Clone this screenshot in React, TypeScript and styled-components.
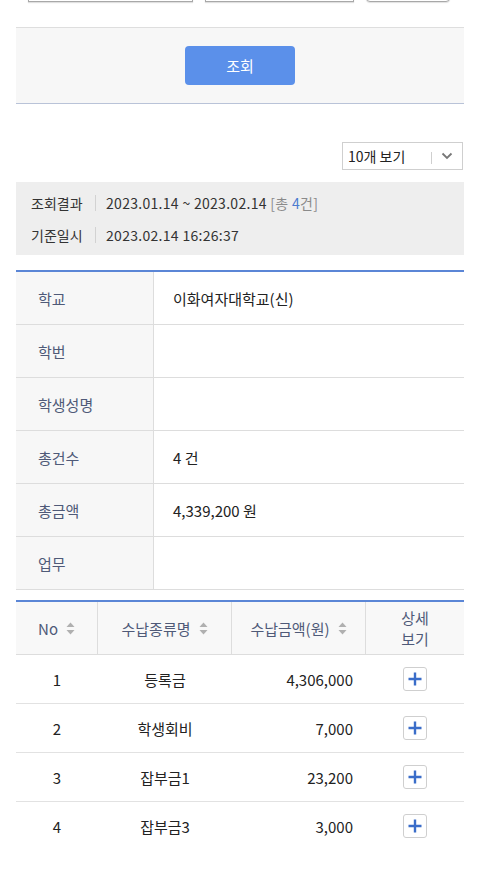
import styled, { createGlobalStyle } from 'styled-components';

const GlobalStyle = createGlobalStyle`
    body {
        margin: 0;
        background: #fff;
        font-family: "Noto Sans CJK KR", "Noto Sans", sans-serif;
        color: #222;
    }
`

const Page = styled.div`
    padding: 0 16px 40px;
`

const FieldRow = styled.div`
    display: flex;
    gap: 12px;
    padding: 0 14px 0 12px;
    margin-top: -30px;
    margin-bottom: 25px;
`

const Field = styled.div<{ $w: number; $round?: boolean }>`
    width: ${p => p.$w}px;
    height: 30px;
    border: 1px solid #a8a8a8;
    border-radius: ${p => (p.$round ? '4px' : '0')};
    box-shadow: 0 1px 1px rgba(0, 0, 0, 0.12);
    background: #fff;
`

const SearchBar = styled.div`
    display: flex;
    justify-content: center;
    padding: 18px 0;
    background: #f7f7f7;
    border-top: 1px solid #dedede;
    border-bottom: 1px solid #b9c3d8;
`

const SearchButton = styled.button`
    width: 110px;
    height: 39px;
    border: none;
    border-radius: 4px;
    background: #5b90ea;
    color: #fff;
    font-family: inherit;
    font-size: 15px;
`

const SelectRow = styled.div`
    display: flex;
    justify-content: flex-end;
    margin: 38px 1px 12px 0;
`

const Select = styled.div`
    display: flex;
    align-items: center;
    width: 119px;
    height: 26px;
    border: 1px solid #cfcfcf;
    font-size: 14px;
    color: #222;

    .label {
        flex: 1;
        padding-left: 5px;
    }

    .bar {
        width: 1px;
        height: 12px;
        background: #cfcfcf;
        margin-top: 4px;
    }

    .chev {
        width: 30px;
        display: flex;
        justify-content: center;
    }
`

const ResultBox = styled.div`
    display: flex;
    flex-direction: column;
    gap: 6px;
    padding: 8px 15px 7px;
    background: #eeeeee;
    font-size: 14px;
    color: #333;
`

const ResultRow = styled.div`
    display: flex;
    align-items: center;
    height: 26px;

    .key {
        width: 64px;
    }

    .sep {
        width: 1px;
        height: 16px;
        background: #d2d2d2;
        margin-right: 10px;
    }

    .val {
        letter-spacing: 0.3px;
    }

    .dim {
        color: #8a8a8a;
    }

    .num {
        color: #4a7bd0;
    }
`

const InfoTable = styled.div`
    margin-top: 15px;
    border-top: 2px solid #5b86d6;
`

const InfoRow = styled.div`
    display: flex;
    height: 52px;
    border-bottom: 1px solid #dddddd;
    font-size: 15px;
`

const InfoLabel = styled.div`
    display: flex;
    align-items: center;
    width: 138px;
    padding-left: 22px;
    box-sizing: border-box;
    background: #f7f7f7;
    border-right: 1px solid #dddddd;
    color: #4f5a78;
`

const InfoValue = styled.div`
    display: flex;
    align-items: center;
    flex: 1;
    padding-left: 19px;
    color: #222;
`

const ListTable = styled.div`
    margin-top: 10px;
    border-top: 2px solid #5b86d6;
`

const Row = styled.div<{ $head?: boolean }>`
    display: grid;
    grid-template-columns: 82px 134px 134px 1fr;
    height: ${p => (p.$head ? '52px' : '48px')};
    border-bottom: 1px solid ${p => (p.$head ? '#dddddd' : '#e2e2e2')};
    background: ${p => (p.$head ? '#f8f8f8' : '#fff')};
    font-size: 15px;

    &:last-child {
        border-bottom: none;
    }
`

const HeadCell = styled.div<{ $last?: boolean }>`
    display: flex;
    align-items: center;
    justify-content: center;
    gap: 8px;
    text-align: center;
    line-height: 21px;
    color: #4f5a78;
    border-right: ${p => (p.$last ? 'none' : '1px solid #dddddd')};
`

const Cell = styled.div<{ $align?: 'center' | 'right' }>`
    display: flex;
    align-items: center;
    justify-content: ${p => (p.$align === 'right' ? 'flex-end' : 'center')};
    padding-right: ${p => (p.$align === 'right' ? '13px' : '0')};
    color: #222;
`

const PlusButton = styled.div`
    display: flex;
    align-items: center;
    justify-content: center;
    width: 22px;
    height: 22px;
    border: 1px solid #cfcfcf;
    border-radius: 3px;
    background: #fff;
`

const SortIcon = () => (
    <svg width="9" height="13" viewBox="0 0 9 13">
        <path d="M4.5 0.5 L8.5 5 L0.5 5 Z" fill="#b0b0b0" />
        <path d="M4.5 12.5 L8.5 8 L0.5 8 Z" fill="#b0b0b0" />
    </svg>
)

const PlusIcon = () => (
    <svg width="16" height="16" viewBox="0 0 16 16">
        <path d="M8 1.5 V14.5 M1.5 8 H14.5" stroke="#3a6dc9" strokeWidth="2.4" />
    </svg>
)

const info = [
    { label: '학교', value: '이화여자대학교(신)' },
    { label: '학번', value: '' },
    { label: '학생성명', value: '' },
    { label: '총건수', value: '4 건' },
    { label: '총금액', value: '4,339,200 원' },
    { label: '업무', value: '' },
]

const items = [
    { no: 1, name: '등록금', amount: '4,306,000' },
    { no: 2, name: '학생회비', amount: '7,000' },
    { no: 3, name: '잡부금1', amount: '23,200' },
    { no: 4, name: '잡부금3', amount: '3,000' },
]

const App = () => {
    return (
        <>
            <GlobalStyle />
            <Page>
                <FieldRow>
                    <Field $w={165} />
                    <Field $w={150} />
                    <Field $w={83} $round />
                </FieldRow>

                <SearchBar>
                    <SearchButton>조회</SearchButton>
                </SearchBar>

                <SelectRow>
                    <Select>
                        <span className="label">10개 보기</span>
                        <span className="bar" />
                        <span className="chev">
                            <svg width="12" height="8" viewBox="0 0 12 8">
                                <path d="M1.5 1.5 L6 6 L10.5 1.5" stroke="#777" strokeWidth="1.8" fill="none" />
                            </svg>
                        </span>
                    </Select>
                </SelectRow>

                <ResultBox>
                    <ResultRow>
                        <span className="key">조회결과</span>
                        <span className="sep" />
                        <span className="val">
                            2023.01.14 ~ 2023.02.14 <span className="dim">[총 <span className="num">4</span>건]</span>
                        </span>
                    </ResultRow>
                    <ResultRow>
                        <span className="key">기준일시</span>
                        <span className="sep" />
                        <span className="val">2023.02.14 16:26:37</span>
                    </ResultRow>
                </ResultBox>

                <InfoTable>
                    {info.map(row => (
                        <InfoRow key={row.label}>
                            <InfoLabel>{row.label}</InfoLabel>
                            <InfoValue>{row.value}</InfoValue>
                        </InfoRow>
                    ))}
                </InfoTable>

                <ListTable>
                    <Row $head>
                        <HeadCell>No <SortIcon /></HeadCell>
                        <HeadCell>수납종류명 <SortIcon /></HeadCell>
                        <HeadCell>수납금액(원) <SortIcon /></HeadCell>
                        <HeadCell $last>상세<br />보기</HeadCell>
                    </Row>
                    {items.map(item => (
                        <Row key={item.no}>
                            <Cell>{item.no}</Cell>
                            <Cell>{item.name}</Cell>
                            <Cell $align="right">{item.amount}</Cell>
                            <Cell>
                                <PlusButton>
                                    <PlusIcon />
                                </PlusButton>
                            </Cell>
                        </Row>
                    ))}
                </ListTable>
            </Page>
        </>
    )
}

export default App
